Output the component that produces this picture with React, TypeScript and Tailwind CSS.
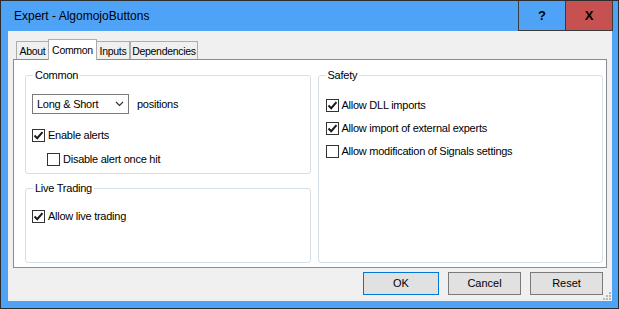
import React from 'react';

const font = "font-['Liberation_Sans',Arial,sans-serif]";

const CheckBox: React.FC<{ checked?: boolean; label: string; className?: string }> = ({ checked, label, className = '' }) => (
  <div className={`flex items-center h-[13px] ${className}`}>
    <span className="w-[13px] h-[13px] border border-[#333333] bg-white flex items-center justify-center shrink-0">
      {checked && (
        <svg width="11" height="11" viewBox="0 0 11 11">
          <path d="M1.5 5.5 L4.2 8.2 L9.5 2.2" fill="none" stroke="#1a1a1a" strokeWidth="2" />
        </svg>
      )}
    </span>
    <span className="ml-[3px] text-[11px] leading-[13px] tracking-[-0.25px] text-black whitespace-nowrap">{label}</span>
  </div>
);

const Group: React.FC<{ title: string; className?: string; children?: React.ReactNode }> = ({ title, className = '', children }) => (
  <fieldset className={`border border-[#d5dfe5] rounded-[3px] ${className}`}>
    <legend className="ml-[7px] px-[2px] text-[11px] leading-[13px] tracking-[-0.25px] text-black">{title}</legend>
    {children}
  </fieldset>
);

const tabs = [
  { name: 'About', w: 'w-[33px]' },
  { name: 'Common', w: 'w-[49px]' },
  { name: 'Inputs', w: 'w-[34px]' },
  { name: 'Dependencies', w: 'w-[68px]' },
];

const App: React.FC = () => {
  return (
    <div className={`w-[619px] h-[309px] bg-[#4fa3f7] border border-[#2d2d2d] flex flex-col ${font}`}>
      {/* title bar */}
      <div className="h-[30px] flex items-stretch shrink-0">
        <div className="flex-1 pl-[13px] flex items-center text-[12px] text-black">Expert - AlgomojoButtons</div>
        <div className="w-[47px] border-l border-b border-[#3a3a3a] flex items-center justify-center text-[13px] font-bold text-black">?</div>
        <div className="w-[47px] border-l border-b border-[#3a3a3a] bg-[#c75050] flex items-center justify-center text-[13px] font-bold text-black">X</div>
        <div className="w-[6px] border-l border-[#3a3a3a]" />
      </div>

      {/* client */}
      <div className="flex-1 ml-[7px] mr-[6px] mb-[7px] bg-[#f0f0f0] flex flex-col">
        <div className="flex items-end pl-[8px] pt-[7px] h-[28px]">
          {tabs.map(t =>
            t.name === 'Common' ? (
              <div key={t.name} className={`relative z-10 -mb-px -mx-[1px] h-[21px] ${t.w} pt-[3px] text-center bg-white border border-b-0 border-[#adadad] text-[10.5px] tracking-[-0.3px] text-black`}>
                {t.name}
              </div>
            ) : (
              <div key={t.name} className={`h-[18px] ${t.w} pt-[3px] text-center border border-b-0 border-[#adadad] bg-[#f0f0f0] text-[10.5px] leading-[13px] tracking-[-0.3px] text-black`}>
                {t.name}
              </div>
            )
          )}
        </div>
        <div className="ml-[5px] mr-[5px] h-[209px] border border-[#898c95] bg-white pt-[9px] pl-[11px] pr-[3px] grid grid-cols-2 gap-x-[7px]">
          <div className="flex flex-col">
            <Group title="Common" className="h-[105px]">
              <div className="flex items-center mt-[12px] ml-[6px]">
                <div className="w-[97px] h-[20px] border border-[#7a7a7a] bg-white flex items-center justify-between pl-[4px] pr-[4px] text-[11px] tracking-[-0.25px] text-black">
                  <span>Long &amp; Short</span>
                  <svg width="9" height="6" viewBox="0 0 9 6">
                    <path d="M1 1 L4.5 4.5 L8 1" fill="none" stroke="#333" strokeWidth="1.2" />
                  </svg>
                </div>
                <span className="ml-[8px] text-[11px] tracking-[-0.25px] text-black">positions</span>
              </div>
              <CheckBox checked label="Enable alerts" className="mt-[15px] ml-[6px]" />
              <CheckBox label="Disable alert once hit" className="mt-[11px] ml-[21px]" />
            </Group>
            <Group title="Live Trading" className="mt-[8px] h-[81px]">
              <CheckBox checked label="Allow live trading" className="mt-[15px] ml-[6px]" />
            </Group>
          </div>
          <Group title="Safety" className="h-[194px]">
            <CheckBox checked label="Allow DLL imports" className="mt-[17px] ml-[7px]" />
            <CheckBox checked label="Allow import of external experts" className="mt-[10px] ml-[7px]" />
            <CheckBox label="Allow modification of Signals settings" className="mt-[10px] ml-[7px]" />
          </Group>
        </div>
        <div className="flex-1 flex items-start pt-[4px] justify-end gap-[9px] pr-[9px] relative">
          <button className="w-[76px] h-[23px] bg-[#e1e1e1] border border-[#0078d7] text-[11px] text-black">OK</button>
          <button className="w-[73px] h-[23px] bg-[#e1e1e1] border border-[#7a7a7a] text-[11px] text-black">Cancel</button>
          <button className="w-[73px] h-[23px] bg-[#e1e1e1] border border-[#7a7a7a] text-[11px] text-black">Reset</button>
          <svg className="absolute right-[1px] bottom-[1px]" width="8" height="8" viewBox="0 0 8 8">
            <rect x="6" y="0" width="2" height="2" fill="#b8b8b8" />
            <rect x="3" y="3" width="2" height="2" fill="#b8b8b8" />
            <rect x="6" y="3" width="2" height="2" fill="#b8b8b8" />
            <rect x="0" y="6" width="2" height="2" fill="#b8b8b8" />
            <rect x="3" y="6" width="2" height="2" fill="#b8b8b8" />
            <rect x="6" y="6" width="2" height="2" fill="#b8b8b8" />
          </svg>
        </div>
      </div>
    </div>
  );
};

export default App;
